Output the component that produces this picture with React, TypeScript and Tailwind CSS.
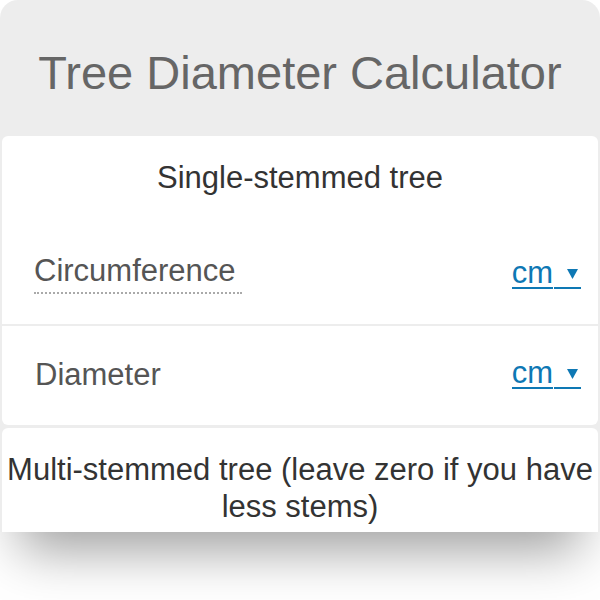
import React from "react";

function UnitSelect() {
  return (
    <span className="flex items-end text-[31px] text-[#0e78b4]">
      <span className="border-b-2 border-[#0e78b4] leading-[28px]">cm</span>
      <span className="ml-px flex h-[28px] w-[27px] items-center justify-end border-b-2 border-[#0e78b4] pr-[3px]">
        <svg width="11" height="10" viewBox="0 0 11 10">
          <path d="M0 0 L11 0 L5.5 10 Z" fill="currentColor" />
        </svg>
      </span>
    </span>
  );
}

export default function App() {
  return (
    <div className="min-h-screen bg-white">
      <div className="h-[532px] w-[600px] overflow-hidden rounded-t-[18px] bg-[#ededed] px-[2px] font-['Liberation_Sans',Arial,sans-serif] shadow-[0_38px_50px_-20px_rgba(0,0,0,0.38)]">
        {/* Header */}
        <div className="flex h-[136px] items-center justify-center pt-2">
          <h1 className="text-[47px] leading-none text-[#666]">
            Tree Diameter Calculator
          </h1>
        </div>

        {/* Single-stemmed */}
        <div className="rounded-[6px] bg-white">
          <div className="h-[88px] pt-[26px] text-center text-[31px] leading-none text-[#333]">
            Single-stemmed tree
          </div>
          <div className="flex h-[100px] items-center justify-between pl-[32px] pr-[17px]">
            <span className="border-b-2 border-dotted border-[#aaa] pb-[6px] pr-[6px] text-[31px] leading-none text-[#555]">
              Circumference
            </span>
            <UnitSelect />
          </div>
          <div className="flex h-[101px] items-center justify-between border-t-2 border-[#ededed] pl-[33px] pr-[17px] pb-[3px]">
            <span className="text-[31px] leading-none text-[#555]">
              Diameter
            </span>
            <UnitSelect />
          </div>
        </div>

        {/* Multi-stemmed */}
        <div className="mt-[3px] rounded-[6px] bg-white px-1 pt-[23px] pb-6 text-center text-[31px] leading-[37px] text-[#333]">
          Multi-stemmed tree (leave zero if you have less stems)
        </div>
      </div>
    </div>
  );
}
